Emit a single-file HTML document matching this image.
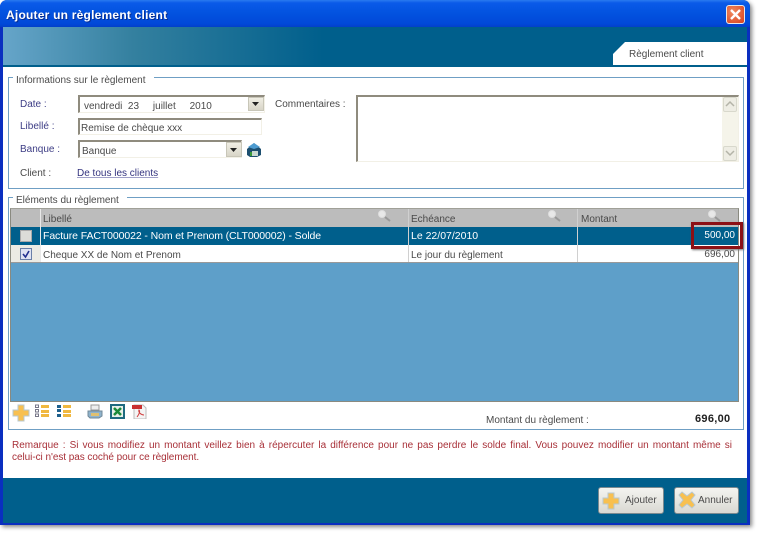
<!DOCTYPE html>
<html><head><meta charset="utf-8"><style>
html,body{margin:0;padding:0;background:#fff}
#p{position:relative;width:760px;height:535px;overflow:hidden;background:#fff;font:10px/12px "Liberation Sans",sans-serif;color:#4a4a4a;filter:blur(.3px)}
#p div,#p span.a,#p svg{position:absolute}
.t{white-space:nowrap}
.lab{color:#3d3d85}
.in{background:#fff;border-top:2px solid #8f8b7e;border-left:2px solid #8f8b7e;border-right:1px solid #f2f0e6;border-bottom:1px solid #f2f0e6;box-sizing:border-box}
.cb{width:16px;height:14px;background:linear-gradient(#f0eee4,#d8d5c8);border:1px solid #c8c6b8;box-sizing:border-box;top:0}
.g{border:1px solid #6f9fc4;box-sizing:border-box}
.lg{background:#fff;padding:0 8px 0 3px;color:#4a4a4a}
.btn{width:66px;height:27px;top:487px;border:1px solid #7c8a90;border-radius:3px;box-sizing:border-box;background:linear-gradient(#f4f4f0,#d9d8d2)}
</style></head><body><div id="p">
<div style="left:0;top:0;width:750px;height:525px;background:#0a2fc0;border-radius:7px 7px 0 0;box-shadow:2px 2px 4px #888"></div>
<div style="left:0;top:0;width:750px;height:27px;border-radius:7px 7px 0 0;background:linear-gradient(#2a7bf0 0,#0a5ae8 3px,#0353e0 12px,#0148d8 24px,#0340c8 27px)"></div>
<div class="t" style="left:6px;top:8px;font:bold 12px/14px 'Liberation Sans',sans-serif;color:#fff;letter-spacing:.22px;text-shadow:1px 1px 0 #0a2f90">Ajouter un règlement client</div>
<div style="left:726px;top:5px;width:19px;height:19px;border:1px solid #e8e8e8;box-sizing:border-box;border-radius:3px;background:radial-gradient(circle at 35% 35%,#ef8a60,#d8401c)"></div>
<svg style="left:726px;top:5px" width="19" height="19"><path d="M5 5L14 14M14 5L5 14" stroke="#fff" stroke-width="2.4"/></svg>
<div style="left:3px;top:27px;width:744px;height:40px;background:linear-gradient(90deg,#66a5c9 0,#34809f 130px,#005f8c 320px,#005f8c 100%)"></div>
<div style="left:3px;top:65px;width:744px;height:2px;background:#005f8c"></div>
<svg style="left:613px;top:42px" width="134" height="23"><path d="M0 23V12L12 0H134V23Z" fill="#fff"/></svg>
<div class="t" style="left:629px;top:49px">Règlement client</div>
<div style="left:3px;top:67px;width:744px;height:411px;background:#fff"></div>
<div style="left:3px;top:478px;width:744px;height:45px;background:#005f8c"></div>

<div class="g" style="left:8px;top:77px;width:736px;height:112px"></div>
<div class="lg t" style="left:13px;top:75px">Informations sur le règlement</div>
<div class="t lab" style="left:20px;top:99px">Date :</div>
<div class="t lab" style="left:20px;top:121px">Libellé :</div>
<div class="t lab" style="left:20px;top:144px">Banque :</div>
<div class="t" style="left:20px;top:168px">Client :</div>
<div class="t" style="left:77px;top:168px;color:#33337f;text-decoration:underline;text-decoration-color:#a0a0c8">De tous les clients</div>
<div class="t" style="left:275px;top:99px">Commentaires :</div>

<div class="in" style="left:78px;top:95px;width:187px;height:18px"><div class="cb" style="left:168px"></div>
<svg style="left:172px;top:5px" width="8" height="5"><path d="M0 0H7L3.500 4Z" fill="#222"/></svg>
<div class="t" style="left:4px;top:4px;white-space:pre">vendredi  23     juillet     2010</div></div>
<div class="in" style="left:78px;top:118px;width:184px;height:17px"><div class="t" style="left:1px;top:3px">Remise de chèque xxx</div></div>
<div class="in" style="left:78px;top:140px;width:164px;height:18px"><div class="cb" style="left:146px;height:15px"></div>
<svg style="left:150px;top:6px" width="8" height="5"><path d="M0 0H7L3.500 4Z" fill="#222"/></svg>
<div class="t" style="left:2px;top:4px">Banque</div></div>
<svg style="left:246px;top:142px" width="16" height="16"><path d="M1 7L8 1L15 7V13L11 15H4L1 13Z" fill="#1d4f70"/><path d="M2 5L8 1L14 5L8 7Z" fill="#4d9bd0"/><rect x="6" y="9" width="6" height="5" fill="#c8d8d0"/><rect x="4" y="10" width="2" height="4" fill="#3a9a3a"/></svg>

<div class="in" style="left:356px;top:95px;width:383px;height:67px"></div>
<div style="left:722px;top:97px;width:16px;height:64px;background:#f5f4ea"></div>
<div style="left:723px;top:97px;width:14px;height:15px;background:#eeede4;border:1px solid #d8d8cc;box-sizing:border-box;border-radius:2px"></div>
<div style="left:723px;top:146px;width:14px;height:15px;background:#eeede4;border:1px solid #d8d8cc;box-sizing:border-box;border-radius:2px"></div>
<svg style="left:723px;top:97px" width="14" height="64" fill="none" stroke="#b4b4a8" stroke-width="1.500"><path d="M3 9L7 5L11 9M3 54L7 58L11 54"/></svg>

<div class="g" style="left:8px;top:197px;width:736px;height:233px"></div>
<div class="lg t" style="left:13px;top:195px">Eléments du règlement</div>

<div style="left:10px;top:208px;width:729px;height:194px;background:#5e9fc9;border:1px solid #8a8a80;border-top-color:#a0a098;box-sizing:border-box"></div>
<div style="left:11px;top:209px;width:727px;height:18px;background:#bcbcbc"></div>
<div style="left:11px;top:227px;width:727px;height:18px;background:#005f8c"></div>
<div style="left:11px;top:245px;width:727px;height:18px;background:#fff;border-bottom:1px solid #999;box-sizing:border-box"></div>
<div style="left:11px;top:245px;width:29px;height:17px;background:#ecebe4"></div>
<div style="left:40px;top:209px;width:1px;height:53px;background:#e8e8e8"></div>
<div style="left:408px;top:209px;width:1px;height:53px;background:#d0d0d0"></div>
<div style="left:577px;top:209px;width:1px;height:53px;background:#d0d0d0"></div>
<div style="left:20px;top:230px;width:12px;height:12px;background:#dcdcd8;border:1px solid #aaa;box-sizing:border-box"></div>
<div style="left:20px;top:248px;width:12px;height:12px;background:#dfe3f2;border:1px solid #6a7fa8;box-sizing:border-box"></div>
<svg style="left:20px;top:248px" width="12" height="12"><path d="M3 6L5.500 9L9 3" stroke="#22308f" stroke-width="1.600" fill="none"/></svg>
<div class="t" style="left:43px;top:214px">Libellé</div>
<div class="t" style="left:411px;top:214px">Echéance</div>
<div class="t" style="left:581px;top:214px">Montant</div>
<div class="t" style="left:43px;top:230px;color:#fff;font-size:10.500px;letter-spacing:-.1px">Facture FACT000022 - Nom et Prenom (CLT000002) - Solde</div>
<div class="t" style="left:411px;top:230px;color:#fff;font-size:10.500px">Le 22/07/2010</div>
<div class="t" style="right:25px;top:230px;color:#fff">500,00</div>
<div class="t" style="left:43px;top:250px">Cheque XX de Nom et Prenom</div>
<div class="t" style="left:411px;top:250px">Le jour du règlement</div>
<div class="t" style="right:25px;top:249px">696,00</div>
<svg style="left:376px;top:209px" width="16" height="14" fill="none"><circle cx="6" cy="5" r="3.500" fill="#e8e8e8" stroke="#ddd"/><path d="M9 8L14 12" stroke="#999" stroke-width="2"/></svg>
<svg style="left:546px;top:209px" width="16" height="14" fill="none"><circle cx="6" cy="5" r="3.500" fill="#e8e8e8" stroke="#ddd"/><path d="M9 8L14 12" stroke="#999" stroke-width="2"/></svg>
<svg style="left:706px;top:209px" width="16" height="14" fill="none"><circle cx="6" cy="5" r="3.500" fill="#e8e8e8" stroke="#ddd"/><path d="M9 8L14 12" stroke="#999" stroke-width="2"/></svg>
<div style="left:691px;top:222px;width:52px;height:27px;border:3px solid #8c1015;box-sizing:border-box;box-shadow:1px 1px 2px #777"></div>

<svg style="left:12px;top:404px" width="18" height="18"><path d="M6 1H12V6H17V12H12V17H6V12H1V6H6Z" fill="#f8c050" stroke="#b8c8d0"/></svg>
<svg style="left:35px;top:404px" width="15" height="14"><g fill="#f0b840"><rect x="6" y="1" width="8" height="3"/><rect x="6" y="6" width="8" height="3"/><rect x="6" y="10" width="8" height="3"/></g><g fill="#fff" stroke="#778"><rect x=".5" y="1" width="3" height="2.500"/><rect x=".5" y="5.500" width="3" height="2.500"/><rect x=".5" y="10" width="3" height="2.500"/></g></svg>
<svg style="left:57px;top:404px" width="15" height="14"><g fill="#f0b840"><rect x="6" y="1" width="8" height="3"/><rect x="6" y="6" width="8" height="3"/><rect x="6" y="10" width="8" height="3"/></g><g fill="#1d5f8c"><rect x="0" y="1" width="4" height="3"/><rect x="0" y="5" width="4" height="3"/><rect x="0" y="10" width="4" height="3"/></g></svg>
<svg style="left:87px;top:404px" width="16" height="15"><path d="M4 1H12V6H4Z" fill="#eee" stroke="#999"/><path d="M1 7H15V12L12 14H3L1 12Z" fill="#8fb3cc" stroke="#708898"/><rect x="4" y="9" width="8" height="3" fill="#e0c070"/></svg>
<svg style="left:110px;top:404px" width="15" height="15"><rect width="15" height="15" fill="#1d6a80"/><rect x="2" y="2" width="11" height="11" fill="#e8f0e8"/><path d="M4 4L11 11M11 4L4 11" stroke="#1a8a3a" stroke-width="2.500"/></svg>
<svg style="left:131px;top:404px" width="16" height="15"><path d="M3 1H12L15 4V15H3Z" fill="#f4f4f4" stroke="#bbb"/><rect x="1" y="1" width="10" height="4" fill="#c83030"/><path d="M6 13C9 9 9 7 8 6C7 8 10 11 13 11" fill="none" stroke="#d04040"/></svg>

<div class="t" style="left:486px;top:415px">Montant du règlement :</div>
<div class="t" style="left:695px;top:413px;font-weight:bold;font-size:11px;color:#222;letter-spacing:.3px">696,00</div>

<div style="left:12px;top:440px;width:720px;color:#a83038;white-space:nowrap;text-align:justify;text-align-last:justify">Remarque : Si vous modifiez un montant veillez bien à répercuter la différence pour ne pas perdre le solde final. Vous pouvez modifier un montant même si</div>
<div class="t" style="left:12px;top:452px;color:#a83038;letter-spacing:-.05px">celui-ci n'est pas coché pour ce règlement.</div>

<div class="btn" style="left:598px"></div>
<svg style="left:601px;top:491px" width="20" height="20"><path d="M7 2H13V7H18V13H13V18H7V13H2V7H7Z" fill="#f8c050" stroke="#b8c8d0"/></svg>
<div class="t" style="left:625px;top:495px">Ajouter</div>
<div class="btn" style="left:674px;width:65px"></div>
<svg style="left:677px;top:490px" width="20" height="20"><path d="M5 2L10 6L15 2L18 5L14 10L18 15L15 18L10 14L5 18L2 15L6 10L2 5Z" fill="#f8c050" stroke="#b8c8d0"/></svg>
<div class="t" style="left:698px;top:495px">Annuler</div>
</div></body></html>
